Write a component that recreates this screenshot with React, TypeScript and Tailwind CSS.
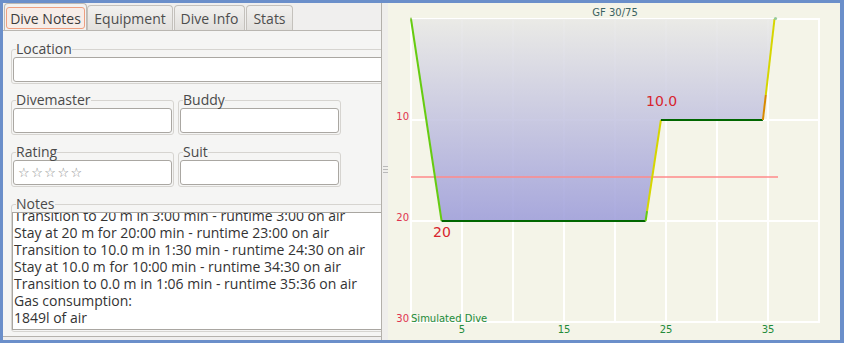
import React from "react";

const notes = [
  "Transition to 20 m in 3:00 min - runtime 3:00 on air",
  "Stay at 20 m for 20:00 min - runtime 23:00 on air",
  "Transition to 10.0 m in 1:30 min - runtime 24:30 on air",
  "Stay at 10.0 m for 10:00 min - runtime 34:30 on air",
  "Transition to 0.0 m in 1:06 min - runtime 35:36 on air",
  "Gas consumption:",
  "1849l of air",
];

function Field({ label, width, children }: { label: string; width: string; children?: React.ReactNode }) {
  return (
    <fieldset className={`border border-[#d6d4d0] rounded-[3px] px-[1px] pb-[1px] ${width}`}>
      <legend className="ml-[3px] leading-[16px] text-[14px] text-[#4a4a4a]">{label}</legend>
      <div className="h-[25px] bg-white border border-[#aaa7a2] rounded-[3px] flex items-center pl-[4px]">
        {children}
      </div>
    </fieldset>
  );
}

function Chart() {
  const xs = [411, 462, 513, 564, 615, 666, 717, 768, 819];
  const ys = [19, 120, 221, 322];
  return (
    <svg width="452" height="337" viewBox="388 3 452 337" className="block font-['DejaVu_Sans',sans-serif]">
      <defs>
        <linearGradient id="fillg" gradientUnits="userSpaceOnUse" x1="0" y1="19" x2="0" y2="221">
          <stop offset="0" stopColor="#e9e9e6" />
          <stop offset="1" stopColor="#9d9dda" />
        </linearGradient>
      </defs>
      <rect x="388" y="3" width="452" height="337" fill="#f4f4e8" />
      {xs.map((x) => (
        <line key={"v" + x} x1={x} y1={18} x2={x} y2={323} stroke="#ffffff" strokeWidth="2" />
      ))}
      {ys.map((y) => (
        <line key={"h" + y} x1={410} y1={y} x2={820} y2={y} stroke="#ffffff" strokeWidth="2" />
      ))}
      <polygon
        points="411,19 441.6,221 645.6,221 660.9,120 762.9,120 774.5,19"
        fill="url(#fillg)"
        fillOpacity="0.88"
      />
      <line x1="411" y1="177" x2="778" y2="177" stroke="#ff8a8a" strokeOpacity="0.75" strokeWidth="2" />
      <line x1="411" y1="19" x2="441.6" y2="221" stroke="#66cc11" strokeWidth="2" />
      <line x1="441.6" y1="221" x2="645.6" y2="221" stroke="#006600" strokeWidth="2.2" />
      <line x1="645.6" y1="221" x2="647.1" y2="211" stroke="#66cc11" strokeWidth="2" />
      <line x1="647.1" y1="211" x2="660.9" y2="120" stroke="#d6d600" strokeWidth="2" />
      <line x1="660.9" y1="120" x2="762.9" y2="120" stroke="#006600" strokeWidth="2.2" />
      <line x1="762.9" y1="120" x2="765.8" y2="95" stroke="#d98a00" strokeWidth="2" />
      <line x1="765.8" y1="95" x2="774.5" y2="19" stroke="#d6d600" strokeWidth="2" />
      <circle cx="775.5" cy="18.5" r="1.6" fill="#99cc99" />
      <circle cx="411" cy="18.5" r="1" fill="#99cc66" />
      <text x="615" y="16" textAnchor="middle" fontSize="10" fill="#3a6262">GF 30/75</text>
      <text x="646" y="106" fontSize="14" fill="#d8252e">10.0</text>
      <text x="433" y="237" fontSize="14" fill="#d8252e">20</text>
      <text x="409" y="120" textAnchor="end" fontSize="10" fill="#e0334f">10</text>
      <text x="409" y="221" textAnchor="end" fontSize="10" fill="#e0334f">20</text>
      <text x="409" y="322" textAnchor="end" fontSize="10" fill="#e0334f">30</text>
      <text x="411" y="322" fontSize="10" fill="#228b3a">Simulated Dive</text>
      {[
        [462, "5"],
        [564, "15"],
        [666, "25"],
        [768, "35"],
      ].map(([x, t]) => (
        <text key={t as string} x={x as number} y={333} textAnchor="middle" fontSize="10" fill="#228b3a">
          {t}
        </text>
      ))}
    </svg>
  );
}

export default function App() {
  return (
    <div className="w-[844px] h-[343px] bg-[#6b8fca] pt-[3px] pb-[3px] pl-[3px] pr-[4px] flex font-['Open_Sans',sans-serif]">
      {/* left pane */}
      <div className="w-[379px] h-[337px] flex flex-col overflow-hidden bg-[#f0efee] border-r border-[#b3b0ab] shrink-0">
        <div className="h-[28px] w-[420px] shrink-0 flex items-end pl-[1px] border-b border-[#b9b6b1] bg-[#f0efee]">
          <div className="h-[27px] w-[83px] rounded-t-[4px] border border-b-0 border-[#bdb9b4] bg-[#f3f2f1] px-[1px] pt-[3px]">
            <div className="h-[22px] rounded-[3px] border border-[#ee9f80] bg-[#f7ede8] flex items-center justify-center text-[14px] text-[#3c3c3c]">
              Dive Notes
            </div>
          </div>
          <div className="h-[25px] w-[86px] rounded-t-[4px] border border-b-0 border-[#c4c1bc] bg-gradient-to-b from-[#f2f1ef] to-[#e2e0dd] flex items-center justify-center text-[14px] text-[#4d4d4d]">
            Equipment
          </div>
          <div className="ml-[1px] h-[25px] w-[71px] rounded-t-[4px] border border-b-0 border-[#c4c1bc] bg-gradient-to-b from-[#f2f1ef] to-[#e2e0dd] flex items-center justify-center text-[14px] text-[#4d4d4d]">
            Dive Info
          </div>
          <div className="ml-[1px] h-[25px] w-[47px] rounded-t-[4px] border border-b-0 border-[#c4c1bc] bg-gradient-to-b from-[#f2f1ef] to-[#e2e0dd] flex items-center justify-center text-[14px] text-[#4d4d4d]">
            Stats
          </div>
        </div>
        <div className="h-[306px] w-[420px] shrink-0 bg-[#f5f5f4] border-b border-[#b5b2ad] pl-[8px] pt-[10px] flex flex-col">
          <Field label="Location" width="w-[400px]" />
          <div className="flex gap-[4px] mt-[8px]">
            <Field label="Divemaster" width="w-[163px]" />
            <Field label="Buddy" width="w-[163px]" />
          </div>
          <div className="flex gap-[4px] mt-[9px]">
            <Field label="Rating" width="w-[163px]">
              <span className="text-[13px] leading-none tracking-[1.5px] text-[#8a8a8a] font-['DejaVu_Sans',sans-serif]">☆☆☆☆☆</span>
            </Field>
            <Field label="Suit" width="w-[163px]" />
          </div>
          <fieldset className="mt-[9px] border border-[#d6d4d0] rounded-[3px] px-0 pb-[1px] w-[400px]">
            <legend className="ml-[4px] leading-[16px] text-[14px] text-[#4a4a4a]">Notes</legend>
            <div className="h-[118px] bg-white border border-[#a9a6a1] overflow-hidden pl-[1px]">
              <div className="-mt-[6px] text-[14px] leading-[17px] text-[#333333] whitespace-nowrap">
                {notes.map((n) => (
                  <div key={n}>{n}</div>
                ))}
              </div>
            </div>
          </fieldset>
        </div>
        <div className="flex-1 bg-[#f0efee]" />
      </div>
      {/* splitter */}
      <div className="w-[6px] h-[337px] bg-[#efeeec] flex flex-col items-end justify-center gap-[2px] pb-[5px] shrink-0">
        <div className="w-[5px] h-[1px] bg-[#b9b9b9]" />
        <div className="w-[5px] h-[1px] bg-[#b9b9b9]" />
        <div className="w-[5px] h-[1px] bg-[#b9b9b9]" />
      </div>
      {/* chart */}
      <div className="w-[452px] h-[337px] shrink-0">
        <Chart />
      </div>
    </div>
  );
}
